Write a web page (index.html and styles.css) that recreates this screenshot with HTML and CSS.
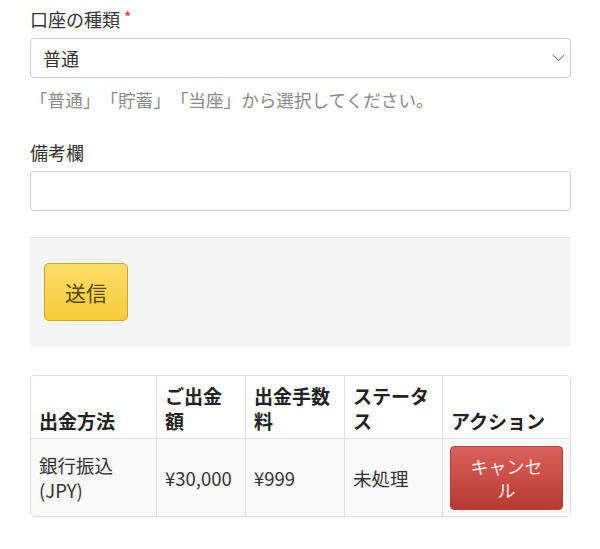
FILE: index.html
```html
<!DOCTYPE html>
<html lang="ja">
<head>
<meta charset="utf-8">
<link rel="stylesheet" href="styles.css">
</head>
<body>
<div class="page">
  <div class="field">
    <label class="label">口座の種類 <span class="req">*</span></label>
    <div class="select">
      <span class="select-value">普通</span>
      <svg class="chev" width="13" height="8" viewBox="0 0 13 8"><path d="M1 1.2 L6.5 6.5 L12 1.2" fill="none" stroke="#808080" stroke-width="1.1"/></svg>
    </div>
    <p class="help">「普通」「貯蓄」「当座」から選択してください。</p>
  </div>
  <div class="field">
    <label class="label">備考欄</label>
    <div class="input"></div>
  </div>
  <div class="actions">
    <button class="btn-submit">送信</button>
  </div>
  <table class="tbl">
    <colgroup>
      <col class="c1"><col class="c2"><col class="c3"><col class="c4"><col class="c5">
    </colgroup>
    <thead>
      <tr>
        <th>出金方法</th>
        <th>ご出金額</th>
        <th>出金手数料</th>
        <th>ステータス</th>
        <th>アクション</th>
      </tr>
    </thead>
    <tbody>
      <tr>
        <td>銀行振込 (JPY)</td>
        <td>¥30,000</td>
        <td>¥999</td>
        <td>未処理</td>
        <td class="act"><button class="btn-cancel">キャンセル</button></td>
      </tr>
    </tbody>
  </table>
</div>
</body>
</html>
```
FILE: styles.css
```css
html, body {
  margin: 0;
  padding: 0;
  background: #fff;
}
body {
  font-family: "Noto Sans CJK JP", "Noto Sans", sans-serif;
  color: #333;
  text-spacing-trim: space-all;
}
.page {
  padding: 6px 29px 0 30px;
}
.field {
  margin-bottom: 26px;
}
.label {
  display: block;
  font-size: 18px;
  line-height: 27px;
  color: #333;
  margin-bottom: 5px;
}
.req {
  color: #d9302a;
  font-size: 16px;
  vertical-align: top;
  line-height: 22px;
}
.select, .input {
  box-sizing: border-box;
  height: 40px;
  border: 1px solid #cfcfcf;
  border-radius: 4px;
  background: #fff;
}
.select {
  display: flex;
  align-items: center;
  justify-content: space-between;
  padding: 0 5px 0 12px;
}
.select-value {
  font-size: 18px;
  color: #333;
}
.chev {
  display: block;
}
.help {
  margin: 8px 0 0;
  font-size: 17.6px;
  line-height: 27px;
  color: #8a8a8a;
}
.actions {
  background: #f5f5f5;
  border-top: 1px solid #e3e3e3;
  padding: 25px 14px 26px;
  margin-bottom: 28px;
}
.btn-submit {
  display: block;
  box-sizing: border-box;
  width: 84px;
  height: 58px;
  border: 1px solid #cfa52a;
  border-radius: 5px;
  background: linear-gradient(#fcdd6c, #f7cb38);
  color: #5b4812;
  font-family: inherit;
  font-size: 21px;
  padding: 0;
}
.tbl {
  width: 100%;
  border-collapse: separate;
  border-spacing: 0;
  border: 1px solid #dedede;
  border-radius: 4px;
  table-layout: fixed;
  font-size: 18.5px;
  line-height: 25px;
}
.c1 { width: 125px; }
.c2 { width: 89px; }
.c3 { width: 99px; }
.c4 { width: 98px; }
.tbl th, .tbl td {
  text-align: left;
  border-left: 1px solid #e0e0e0;
  padding: 0 8px;
}
.tbl th:first-child, .tbl td:first-child {
  border-left: none;
}
.tbl th {
  font-size: 19px;
  font-weight: bold;
  color: #222;
  vertical-align: bottom;
  height: 50px;
  padding-top: 7px;
  padding-bottom: 5px;
}
.tbl td {
  background: #f9f9f9;
  border-top: 1px solid #e0e0e0;
  vertical-align: middle;
  color: #333;
  padding-top: 7px;
  padding-bottom: 6px;
}
.tbl td.act {
  padding-left: 7px;
  padding-right: 7px;
}
.btn-cancel {
  display: block;
  box-sizing: border-box;
  width: 113px;
  height: 64px;
  border: 1px solid #b3403a;
  border-radius: 4px;
  background: linear-gradient(#d9625c, #b6392f);
  color: #f8e6e5;
  font-family: inherit;
  font-size: 18px;
  line-height: 24px;
  padding: 0 14px;
}
```
